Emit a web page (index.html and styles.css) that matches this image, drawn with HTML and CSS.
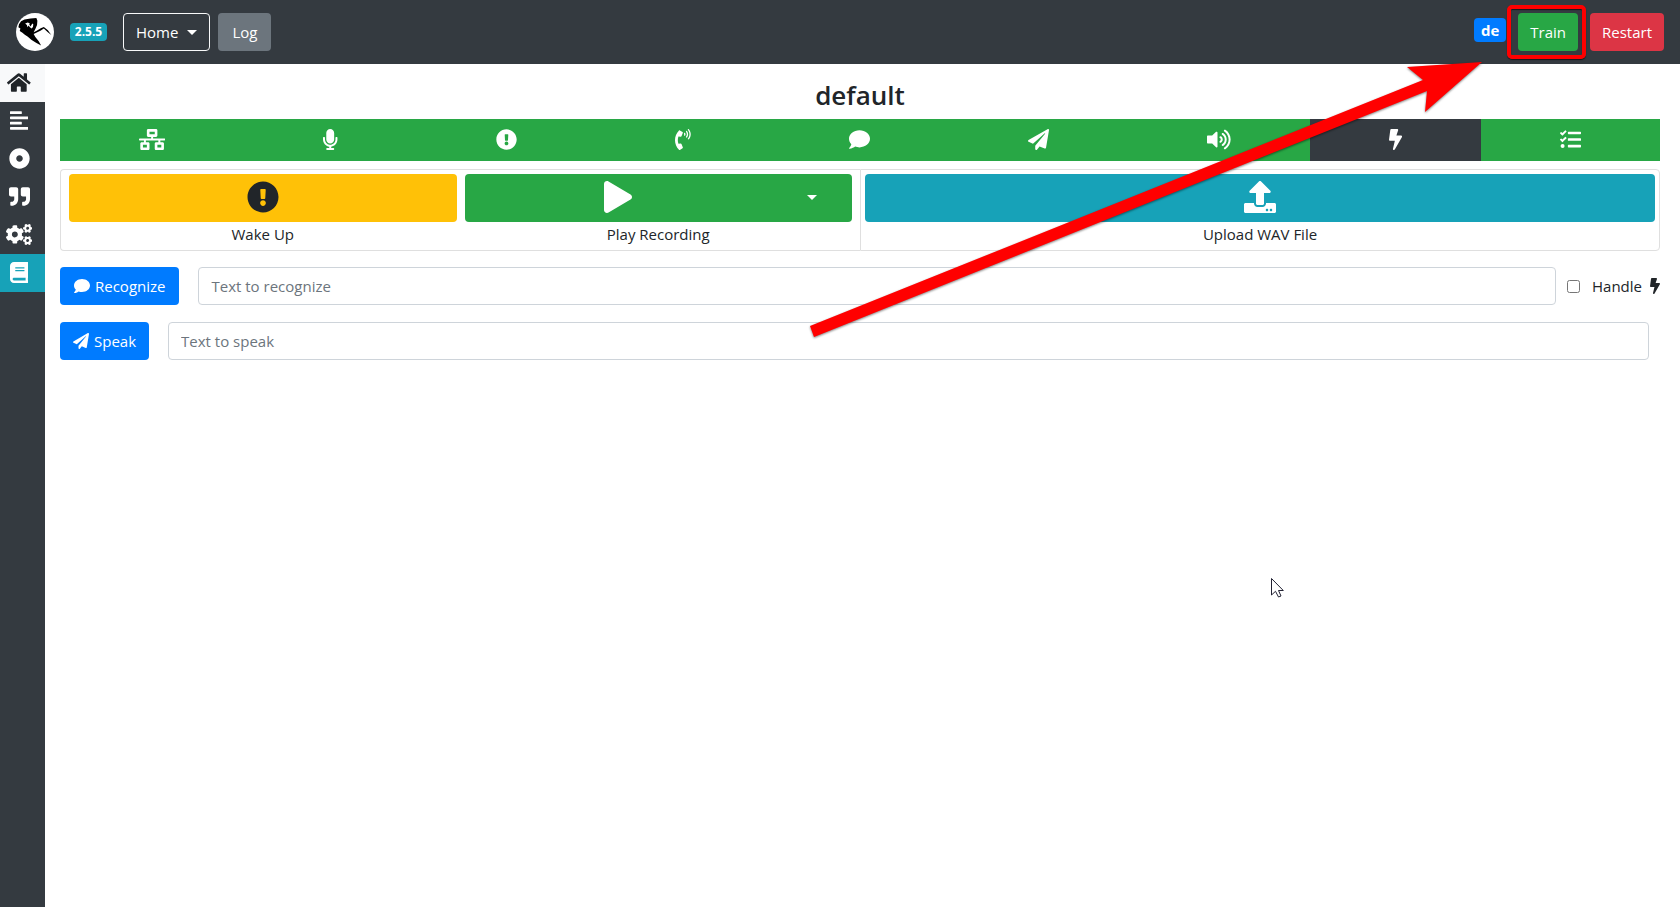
FILE: index.html
```html
<!DOCTYPE html>
<html lang="en">
<head>
<meta charset="utf-8">
<title>Home</title>
<link rel="stylesheet" href="styles.css">
</head>
<body>
<header class="navbar">
  <a class="brand" href="#" aria-label="Home page">
    <svg class="logo" viewBox="49 40 112 112" aria-hidden="true">
      <circle cx="105" cy="96" r="56" fill="#fff"/>
      <path fill="#000" d="M58 73L64 64L74 59L92 56L109 55L112 63L111 75L106 87L101 97L110 92L122 85L131 81L143 91L153 105L142 96L131 86L121 92L101 102L106 111L116 123L123 136L108 128L94 119L84 110L75 104L68 98L60 93L62 86L56 82Z"/>
      <path fill="#fff" d="M76 71L84 68L90 71L88 74L92 80L97 71L100 73L99 81L95 86L90 82L86 77L83 82L81 75Z"/>
    </svg>
  </a>
  <span class="badge badge-info">2.5.5</span>
  <button class="btn btn-outline" type="button">Home <span class="caret"></span></button>
  <button class="btn btn-secondary" type="button">Log</button>
  <div class="nav-right">
    <span class="badge badge-lang">de</span>
    <div class="marked">
      <button class="btn btn-success" type="button">Train</button>
      <span class="frame"></span>
    </div>
    <button class="btn btn-danger" type="button">Restart</button>
  </div>
</header>

<div class="layout">
  <nav class="sidebar" aria-label="Main">
    <a class="side-item side-current" href="#" aria-label="Home"><span class="side-icon"><svg class="icon icon-lg" viewBox="0 0 576 512"><path d="M280.37 148.26L96 300.11V464a16 16 0 0 0 16 16l112.06-.29a16 16 0 0 0 15.92-16V368a16 16 0 0 1 16-16h64a16 16 0 0 1 16 16v95.64a16 16 0 0 0 16 16.05L464 480a16 16 0 0 0 16-16V300L295.67 148.26a12.19 12.19 0 0 0-15.3 0zM571.6 251.47L488 182.56V44.05a12 12 0 0 0-12-12h-56a12 12 0 0 0-12 12v72.61L318.47 43a48 48 0 0 0-61 0L4.34 251.47a12 12 0 0 0-1.6 16.9l25.5 31A12 12 0 0 0 45.15 301l235.22-193.74a12.19 12.19 0 0 1 15.3 0L530.9 301a12 12 0 0 0 16.9-1.6l25.5-31a12 12 0 0 0-1.7-16.93z"/></svg></span></a>
    <a class="side-item" href="#" aria-label="Sentences"><span class="side-icon"><svg class="icon icon-lg" viewBox="0 0 448 512"><path d="M12.83 352h262.34A12.82 12.82 0 0 0 288 339.17v-38.34A12.82 12.82 0 0 0 275.17 288H12.83A12.82 12.82 0 0 0 0 300.83v38.34A12.82 12.82 0 0 0 12.83 352zm0-256h262.34A12.82 12.82 0 0 0 288 83.17V44.83A12.82 12.82 0 0 0 275.17 32H12.83A12.82 12.82 0 0 0 0 44.83v38.34A12.82 12.82 0 0 0 12.83 96zM432 160H16a16 16 0 0 0-16 16v32a16 16 0 0 0 16 16h416a16 16 0 0 0 16-16v-32a16 16 0 0 0-16-16zm0 256H16a16 16 0 0 0-16 16v32a16 16 0 0 0 16 16h416a16 16 0 0 0 16-16v-32a16 16 0 0 0-16-16z"/></svg></span></a>
    <a class="side-item" href="#" aria-label="Slots"><span class="side-icon"><svg class="icon icon-lg" viewBox="0 0 512 512"><path d="M256 8C119.033 8 8 119.033 8 256s111.033 248 248 248 248-111.033 248-248S392.967 8 256 8zm80 248c0 44.112-35.888 80-80 80s-80-35.888-80-80 35.888-80 80-80 80 35.888 80 80z"/></svg></span></a>
    <a class="side-item" href="#" aria-label="Words"><span class="side-icon"><svg class="icon icon-lg" viewBox="0 0 512 512"><path d="M464 32H336c-26.5 0-48 21.5-48 48v128c0 26.5 21.5 48 48 48h80v64c0 35.3-28.7 64-64 64h-8c-13.3 0-24 10.7-24 24v48c0 13.3 10.7 24 24 24h8c88.4 0 160-71.6 160-160V80c0-26.5-21.5-48-48-48zm-288 0H48C21.5 32 0 53.5 0 80v128c0 26.5 21.5 48 48 48h80v64c0 35.3-28.7 64-64 64h-8c-13.3 0-24 10.7-24 24v48c0 13.3 10.7 24 24 24h8c88.4 0 160-71.6 160-160V80c0-26.5-21.5-48-48-48z"/></svg></span></a>
    <a class="side-item" href="#" aria-label="Settings"><span class="side-icon"><svg class="icon icon-lg" viewBox="0 0 640 512"><path id="small-cog" d="M512.1 191l-8.2 14.3c-3 5.3-9.4 7.5-15.1 5.4-11.8-4.4-22.6-10.7-32.1-18.6-4.6-3.8-5.8-10.5-2.8-15.7l8.2-14.3c-6.9-8-12.3-17.3-15.9-27.4h-16.5c-6 0-11.2-4.3-12.2-10.3-2-12-2.1-24.6 0-37.1 1-6 6.2-10.4 12.2-10.4h16.5c3.6-10.1 9-19.4 15.9-27.4l-8.2-14.3c-3-5.2-1.9-11.9 2.8-15.7 9.5-7.9 20.4-14.2 32.1-18.6 5.7-2.1 12.1.1 15.1 5.4l8.2 14.3c10.5-1.9 21.2-1.9 31.7 0L552 6.3c3-5.3 9.4-7.5 15.1-5.4 11.8 4.4 22.6 10.7 32.1 18.6 4.6 3.8 5.8 10.5 2.8 15.7l-8.2 14.3c6.9 8 12.3 17.3 15.9 27.4h16.5c6 0 11.2 4.3 12.2 10.3 2 12 2.1 24.6 0 37.1-1 6-6.2 10.4-12.2 10.4h-16.5c-3.6 10.1-9 19.4-15.9 27.4l8.2 14.3c3 5.2 1.9 11.9-2.8 15.7-9.5 7.9-20.4 14.2-32.1 18.6-5.7 2.1-12.1-.1-15.1-5.4l-8.2-14.3c-10.4 1.9-21.2 1.9-31.7 0zm-10.5-58.8c38.5 29.6 82.4-14.3 52.8-52.8-38.5-29.7-82.4 14.3-52.8 52.8z"/><use href="#small-cog" transform="translate(0 299)"/><path d="M386.3 286.1l33.7 16.8c10.1 5.8 14.5 18.1 10.5 29.1-8.9 24.2-26.4 46.4-42.6 65.8-7.4 8.9-20.2 11.1-30.3 5.3l-29.1-16.8c-16 13.7-34.6 24.6-54.9 31.7v33.6c0 11.6-8.3 21.6-19.7 23.6-24.6 4.2-50.4 4.4-75.9 0-11.5-2-20-11.9-20-23.6V418c-20.3-7.2-38.9-18-54.9-31.7L74 403c-10 5.8-22.9 3.6-30.3-5.3-16.2-19.4-33.3-41.6-42.2-65.7-4-10.9.4-23.2 10.5-29.1l33.3-16.8c-3.9-20.9-3.9-42.4 0-63.4L12 205.8c-10.1-5.8-14.6-18.1-10.5-29 8.9-24.2 26-46.4 42.2-65.8 7.4-8.9 20.2-11.1 30.3-5.3l29.1 16.8c16-13.7 34.6-24.6 54.9-31.7V57.1c0-11.5 8.2-21.5 19.6-23.5 24.6-4.2 50.5-4.4 76-.1 11.5 2 20 11.9 20 23.6v33.6c20.3 7.2 38.9 18 54.9 31.7l29.1-16.8c10-5.8 22.9-3.6 30.3 5.3 16.2 19.4 33.2 41.6 42.1 65.8 4 10.9.1 23.2-10 29.1l-33.7 16.8c3.9 21 3.9 42.5 0 63.5zm-117.6 21.1c59.2-77-28.7-164.9-105.7-105.7-59.2 77 28.7 164.9 105.7 105.7z"/></svg></span></a>
    <a class="side-item side-docs" href="#" aria-label="Documentation"><span class="side-icon"><svg class="icon icon-lg" viewBox="0 0 448 512"><path d="M448 360V24c0-13.3-10.7-24-24-24H96C43 0 0 43 0 96v320c0 53 43 96 96 96h328c13.3 0 24-10.7 24-24v-16c0-7.5-3.5-14.3-8.9-18.7-4.2-15.4-4.2-59.3 0-74.7 5.4-4.3 8.9-11.1 8.9-18.6zM128 134c0-3.3 2.7-6 6-6h212c3.3 0 6 2.7 6 6v20c0 3.3-2.7 6-6 6H134c-3.3 0-6-2.7-6-6v-20zm0 64c0-3.3 2.7-6 6-6h212c3.3 0 6 2.7 6 6v20c0 3.3-2.7 6-6 6H134c-3.3 0-6-2.7-6-6v-20zm253.4 250H96c-17.7 0-32-14.3-32-32 0-17.6 14.4-32 32-32h285.4c-1.9 17.1-1.9 46.9 0 64z"/></svg></span></a>
  </nav>

  <main class="content">
    <h1 class="title">default</h1>

    <div class="services">
      <button class="service" type="button" aria-label="Network"><svg class="icon icon-lg" viewBox="0 0 640 512"><path d="M640 264v-16c0-8.84-7.16-16-16-16H344v-40h72c17.67 0 32-14.33 32-32V32c0-17.67-14.33-32-32-32H224c-17.67 0-32 14.33-32 32v128c0 17.67 14.33 32 32 32h72v40H16c-8.84 0-16 7.16-16 16v16c0 8.84 7.16 16 16 16h104v40H64c-17.67 0-32 14.33-32 32v128c0 17.67 14.33 32 32 32h160c17.67 0 32-14.33 32-32V352c0-17.67-14.33-32-32-32h-56v-40h304v40h-56c-17.67 0-32 14.33-32 32v128c0 17.67 14.33 32 32 32h160c17.67 0 32-14.33 32-32V352c0-17.67-14.33-32-32-32h-56v-40h104c8.84 0 16-7.16 16-16zM256 128V64h128v64H256zm-64 320H96v-64h96v64zm352 0h-96v-64h96v64z"/></svg></button>
      <button class="service" type="button" aria-label="Audio recording"><svg class="icon icon-lg" viewBox="0 0 352 512"><path d="M176 352c53.02 0 96-42.98 96-96V96c0-53.02-42.98-96-96-96S80 42.98 80 96v160c0 53.02 42.98 96 96 96zm160-160h-16c-8.84 0-16 7.16-16 16v48c0 74.8-64.49 134.82-140.79 127.38C96.71 376.89 48 317.11 48 250.3V208c0-8.84-7.16-16-16-16H16c-8.84 0-16 7.16-16 16v40.16c0 89.64 63.97 169.55 152 181.69V464H96c-8.84 0-16 7.16-16 16v16c0 8.84 7.16 16 16 16h160c8.84 0 16-7.16 16-16v-16c0-8.84-7.16-16-16-16h-56v-33.77C285.71 418.47 352 344.9 352 256v-48c0-8.84-7.16-16-16-16z"/></svg></button>
      <button class="service" type="button" aria-label="Wake word"><svg class="icon icon-lg" viewBox="0 0 512 512"><path d="M504 256c0 136.997-111.043 248-248 248S8 392.997 8 256C8 119.083 119.043 8 256 8s248 111.083 248 248zm-248 50c-25.405 0-46 20.595-46 46s20.595 46 46 46 46-20.595 46-46-20.595-46-46-46zm-43.673-165.346l7.418 136c.347 6.364 5.609 11.346 11.982 11.346h48.546c6.373 0 11.635-4.982 11.982-11.346l7.418-136c.375-6.874-5.098-12.654-11.982-12.654h-63.383c-6.884 0-12.356 5.78-11.981 12.654z"/></svg></button>
      <button class="service" type="button" aria-label="Speech to text"><svg class="icon icon-lg" viewBox="0 0 384 512"><path d="M97.333 506.966c-129.874-129.874-129.681-340.252 0-469.933 5.698-5.698 14.527-6.632 21.263-2.422l64.817 40.513a17.187 17.187 0 0 1 6.849 20.958l-32.408 81.021a17.188 17.188 0 0 1-17.669 10.719l-55.81-5.58c-21.051 58.261-20.612 122.471 0 179.515l55.811-5.581a17.188 17.188 0 0 1 17.669 10.719l32.408 81.022a17.188 17.188 0 0 1-6.849 20.958l-64.817 40.513a17.19 17.19 0 0 1-21.264-2.422zM247.126 95.473c11.832 20.047 11.832 45.008 0 65.055-3.95 6.693-13.108 7.959-18.718 2.581l-5.975-5.726c-3.911-3.748-4.793-9.622-2.261-14.41a32.063 32.063 0 0 0 0-29.945c-2.533-4.788-1.65-10.662 2.261-14.41l5.975-5.726c5.61-5.378 14.768-4.112 18.718 2.581zm91.787-91.187c60.14 71.604 60.092 175.882 0 247.428-4.474 5.327-12.53 5.746-17.552.933l-5.798-5.557c-4.56-4.371-4.977-11.529-.93-16.379 49.687-59.538 49.646-145.933 0-205.422-4.047-4.85-3.631-12.008.93-16.379l5.798-5.557c5.022-4.813 13.078-4.394 17.552.933zm-45.972 44.941c36.05 46.322 36.108 111.149 0 157.546-4.39 5.641-12.697 6.251-17.856 1.304l-5.818-5.579c-4.4-4.219-4.998-11.095-1.285-15.931 26.536-34.564 26.534-82.572 0-117.134-3.713-4.836-3.115-11.711 1.285-15.931l5.818-5.579c5.159-4.947 13.466-4.337 17.856 1.304z"/></svg></button>
      <button class="service" type="button" aria-label="Intent recognition"><svg class="icon icon-lg" viewBox="0 0 512 512"><path d="M256 32C114.6 32 0 125.1 0 240c0 49.6 21.4 95 57 130.7C44.5 421.1 2.7 466 2.2 466.5c-2.2 2.3-2.8 5.7-1.5 8.7S4.8 480 8 480c66.3 0 116-31.8 140.6-51.4 32.7 12.3 69 19.4 107.4 19.4 141.4 0 256-93.1 256-208S397.4 32 256 32z"/></svg></button>
      <button class="service" type="button" aria-label="Text to speech"><svg class="icon icon-lg" viewBox="0 0 512 512"><path d="M476 3.2L12.5 270.6c-18.1 10.4-15.8 35.6 2.2 43.2L121 358.4l287.3-253.2c5.5-4.9 13.3 2.6 8.6 8.3L176 407v80.5c0 23.6 28.5 32.9 42.5 15.8L282 426l124.6 52.2c14.2 6 30.4-2.9 33-18.2l72-432C515 7.8 493.3-6.8 476 3.2z"/></svg></button>
      <button class="service" type="button" aria-label="Audio playing"><svg class="icon icon-lg" viewBox="0 0 576 512"><path d="M215.03 71.05L126.06 160H24c-13.26 0-24 10.74-24 24v144c0 13.25 10.74 24 24 24h102.06l88.97 88.95c15.03 15.03 40.97 4.47 40.97-16.97V88.02c0-21.46-25.96-31.98-40.97-16.97zm233.32-51.08c-11.17-7.33-26.18-4.24-33.51 6.95-7.34 11.17-4.22 26.18 6.95 33.51 66.27 43.49 105.82 116.6 105.82 195.58 0 78.98-39.55 152.09-105.82 195.58-11.17 7.32-14.29 22.34-6.95 33.5 7.04 10.71 21.93 14.56 33.51 6.95C528.27 439.58 576 351.33 576 256S528.27 72.43 448.35 19.97zM480 256c0-63.53-32.06-121.94-85.77-156.24-11.19-7.14-26.03-3.82-33.12 7.46s-3.78 26.21 7.41 33.36C408.27 165.97 432 209.11 432 256s-23.73 90.02-63.48 115.42c-11.19 7.14-14.5 22.07-7.41 33.36 6.51 10.36 21.12 15.14 33.12 7.46C447.94 377.94 480 319.54 480 256zm-141.77-76.87c-11.58-6.33-26.19-2.16-32.61 9.45-6.39 11.61-2.16 26.2 9.45 32.61C327.98 228.28 336 241.63 336 256c0 14.38-8.02 27.72-20.92 34.81-11.61 6.41-15.84 21-9.45 32.61 6.43 11.66 21.05 15.8 32.61 9.45 28.23-15.55 45.77-45 45.77-76.88s-17.54-61.32-45.78-76.86z"/></svg></button>
      <button class="service service-off" type="button" aria-label="Intent handling"><svg class="icon icon-lg" viewBox="0 0 320 512"><path d="M296 160H180.6l42.6-129.8C227.2 15 215.7 0 200 0H56C44 0 33.8 8.9 32.2 20.8l-32 240C-1.7 275.2 9.5 288 24 288h118.7L96.6 482.5c-3.6 15.2 8 29.5 23.3 29.5 8.4 0 16.4-4.4 20.8-12l176-304c9.3-15.9-2.2-36-20.7-36z"/></svg></button>
      <button class="service" type="button" aria-label="Dialogue management"><svg class="icon icon-lg" viewBox="0 0 512 512"><path d="M139.61 35.5a12 12 0 0 0-17 0L58.93 98.81l-22.7-22.12a12 12 0 0 0-17 0L3.53 92.41a12 12 0 0 0 0 17l47.59 47.4a12.78 12.78 0 0 0 17.61 0l15.59-15.62L156.52 69a12.09 12.09 0 0 0 .09-17zm0 159.19a12 12 0 0 0-17 0l-63.68 63.72-22.7-22.1a12 12 0 0 0-17 0L3.53 252a12 12 0 0 0 0 17L51 316.5a12.77 12.77 0 0 0 17.6 0l15.7-15.69 72.2-72.22a12 12 0 0 0 .09-16.9zM64 368c-26.49 0-48.59 21.5-48.59 48S37.53 464 64 464a48 48 0 0 0 0-96zm432 16H208a16 16 0 0 0-16 16v32a16 16 0 0 0 16 16h288a16 16 0 0 0 16-16v-32a16 16 0 0 0-16-16zm0-320H208a16 16 0 0 0-16 16v32a16 16 0 0 0 16 16h288a16 16 0 0 0 16-16V80a16 16 0 0 0-16-16zm0 160H208a16 16 0 0 0-16 16v32a16 16 0 0 0 16 16h288a16 16 0 0 0 16-16v-32a16 16 0 0 0-16-16z"/></svg></button>
    </div>

    <div class="cards">
      <section class="card card-voice">
        <div class="action">
          <button class="big big-warning" id="wake" type="button" aria-labelledby="wake-label"><svg class="icon icon-2x" viewBox="0 0 512 512"><path d="M504 256c0 136.997-111.043 248-248 248S8 392.997 8 256C8 119.083 119.043 8 256 8s248 111.083 248 248zm-248 50c-25.405 0-46 20.595-46 46s20.595 46 46 46 46-20.595 46-46-20.595-46-46-46zm-43.673-165.346l7.418 136c.347 6.364 5.609 11.346 11.982 11.346h48.546c6.373 0 11.635-4.982 11.982-11.346l7.418-136c.375-6.874-5.098-12.654-11.982-12.654h-63.383c-6.884 0-12.356 5.78-11.981 12.654z"/></svg></button>
          <label id="wake-label" for="wake">Wake Up</label>
        </div>
        <div class="action">
          <div class="split">
            <button class="big big-success split-main" id="play" type="button" aria-labelledby="play-label"><svg class="icon icon-2x" viewBox="0 0 448 512"><path d="M424.4 214.7L72.4 6.6C43.8-10.3 0 6.1 0 47.9V464c0 37.5 40.7 60.1 72.4 41.3l352-208c31.4-18.5 31.5-64.1 0-82.6z"/></svg></button>
            <button class="big big-success split-toggle" type="button" aria-label="More playback options"><span class="caret"></span></button>
          </div>
          <label id="play-label" for="play">Play Recording</label>
        </div>
      </section>
      <section class="card card-upload">
        <div class="action">
          <button class="big big-info" id="upload" type="button" aria-labelledby="upload-label"><svg class="icon icon-2x" viewBox="0 0 512 512"><path d="M296 384h-80c-13.3 0-24-10.7-24-24V192h-87.7c-17.8 0-26.7-21.5-14.1-34.1L242.3 5.7c7.5-7.5 19.8-7.5 27.3 0l152.2 152.2c12.6 12.6 3.7 34.1-14.1 34.1H320v168c0 13.3-10.7 24-24 24zm216-8v112c0 13.3-10.7 24-24 24H24c-13.3 0-24-10.7-24-24V376c0-13.3 10.7-24 24-24h136v8c0 30.9 25.1 56 56 56h80c30.9 0 56-25.1 56-56v-8h136c13.3 0 24 10.7 24 24zm-124 88c0-11-9-20-20-20s-20 9-20 20 9 20 20 20 20-9 20-20zm64 0c0-11-9-20-20-20s-20 9-20 20 9 20 20 20 20-9 20-20z"/></svg></button>
          <label id="upload-label" for="upload">Upload WAV File</label>
        </div>
      </section>
    </div>

    <form class="row row-recognize">
      <button class="btn btn-primary" type="button"><svg class="icon" viewBox="0 0 512 512"><path d="M256 32C114.6 32 0 125.1 0 240c0 49.6 21.4 95 57 130.7C44.5 421.1 2.7 466 2.2 466.5c-2.2 2.3-2.8 5.7-1.5 8.7S4.8 480 8 480c66.3 0 116-31.8 140.6-51.4 32.7 12.3 69 19.4 107.4 19.4 141.4 0 256-93.1 256-208S397.4 32 256 32z"/></svg>Recognize</button>
      <input class="field" type="text" placeholder="Text to recognize" aria-label="Text to recognize">
      <div class="check">
        <input class="tick" type="checkbox" id="handle">
        <label class="check-label" for="handle">Handle <svg class="icon" viewBox="0 0 320 512"><path d="M296 160H180.6l42.6-129.8C227.2 15 215.7 0 200 0H56C44 0 33.8 8.9 32.2 20.8l-32 240C-1.7 275.2 9.5 288 24 288h118.7L96.6 482.5c-3.6 15.2 8 29.5 23.3 29.5 8.4 0 16.4-4.4 20.8-12l176-304c9.3-15.9-2.2-36-20.7-36z"/></svg></label>
      </div>
    </form>
    <form class="row row-speak">
      <button class="btn btn-primary" type="button"><svg class="icon" viewBox="0 0 512 512"><path d="M476 3.2L12.5 270.6c-18.1 10.4-15.8 35.6 2.2 43.2L121 358.4l287.3-253.2c5.5-4.9 13.3 2.6 8.6 8.3L176 407v80.5c0 23.6 28.5 32.9 42.5 15.8L282 426l124.6 52.2c14.2 6 30.4-2.9 33-18.2l72-432C515 7.8 493.3-6.8 476 3.2z"/></svg>Speak</button>
      <input class="field" type="text" placeholder="Text to speak" aria-label="Text to speak">
    </form>
  </main>
</div>

<svg class="arrow" viewBox="0 0 680 284" aria-hidden="true"><path d="M0 264L613 18L597 5L672 0L615 50L617 29L4 275Z"/></svg>
<svg class="pointer" viewBox="0 0 13 20" aria-hidden="true"><path d="M.5.5V17L4.500 13.300L7.500 19L10 18L7.500 12.500H12.300Z"/></svg>
</body>
</html>
```
FILE: styles.css
```css
*, *::before, *::after { box-sizing: border-box; }

body {
  margin: 0;
  min-height: 100vh;
  display: flex;
  flex-direction: column;
  position: relative;
  background: #fff;
  color: #212529;
  font: 15px/24px "Open Sans", "Noto Sans", sans-serif;
}

button, input { font: inherit; }
button { cursor: pointer; }

.icon { height: 16px; width: auto; fill: currentColor; flex: none; }
.icon-lg { height: 21px; }
.icon-2x { height: 32px; }

.caret {
  border-top: 5px solid currentColor;
  border-left: 5px solid transparent;
  border-right: 5px solid transparent;
}

/* Top bar */
.navbar {
  display: flex;
  align-items: center;
  height: 64px;
  padding: 0 16px;
  background: #343a40;
}
.brand { display: flex; margin-right: 16px; }
.logo { width: 38px; height: 38px; }

.badge {
  border-radius: 4px;
  color: #fff;
  font-weight: 700;
  text-align: center;
}
.badge-info {
  width: 37px;
  margin-right: 16px;
  background: #17a2b8;
  font-size: 12px;
  line-height: 18px;
}
.badge-lang {
  width: 32px;
  margin: 0 12px 4px 0;
  background: #007bff;
  font-size: 15px;
  line-height: 24px;
}

.btn {
  display: inline-flex;
  align-items: center;
  justify-content: center;
  height: 38px;
  padding: 0 12px;
  border: 1px solid transparent;
  border-radius: 4px;
  color: #fff;
  white-space: nowrap;
}
.btn-outline { gap: 9px; margin-right: 8px; border-color: #f8f9fa; background: transparent; }
.btn-secondary { padding: 0 13px; background: #6c757d; }
.btn-success { padding: 0 11px; background: #28a745; }
.btn-danger { padding: 0 11px; background: #dc3545; }
.btn-primary { gap: 5px; background: #007bff; }

.nav-right { display: flex; align-items: center; margin-left: auto; }
.marked { position: relative; display: flex; margin-right: 12px; }
.frame {
  position: absolute;
  inset: -8px -8px -8px -11px;
  border: 4px solid #f00;
  border-radius: 5px;
  box-shadow: 0 1px 1px rgba(0, 0, 0, .6), inset 0 1px 1px rgba(0, 0, 0, .6);
  pointer-events: none;
}

/* Page body */
.layout { display: flex; flex: 1; }
.sidebar { flex: 0 0 45px; background: #343a40; }
.side-item { display: flex; align-items: center; height: 38px; padding: 0 0 2px 6px; color: #fff; }
.side-icon { display: flex; justify-content: center; width: 26px; }
.side-current { background: #f8f9fa; color: #212529; }
.side-docs { background: #17a2b8; }

.content { flex: 1; min-width: 0; padding: 14px 20px 0 15px; }
.title { margin: 0 0 7px; font-size: 26px; line-height: 34px; font-weight: 600; text-align: center; }

.services { display: flex; }
.service {
  flex: 1 1 auto;
  display: flex;
  align-items: center;
  justify-content: center;
  height: 42px;
  padding: 0 12px 2px;
  border: 0;
  background: #28a745;
  color: #fff;
}
.service-off { background: #343a40; }

.cards { display: grid; grid-template-columns: 1fr 1fr; margin-top: 8px; }
.card { display: flex; border: 1px solid #dfdfdf; padding: 4px; }
.card-voice { gap: 8px; padding: 4px 8px; border-right: 0; border-radius: 4px 0 0 4px; }
.card-upload { border-radius: 0 4px 4px 0; }
.action { flex: 1 1 0; display: flex; flex-direction: column; text-align: center; }
.big {
  display: flex;
  align-items: center;
  justify-content: center;
  width: 100%;
  height: 48px;
  padding: 0 12px 2px;
  border: 0;
  border-radius: 4px;
  color: #fff;
}
.big-warning { background: #ffc107; color: #212529; }
.big-success { background: #28a745; }
.big-info { background: #17a2b8; }
.split { display: flex; }
.split-main { flex: 1; border-radius: 4px 0 0 4px; }
.split-toggle { flex: 0 0 80px; border-radius: 0 4px 4px 0; }

.row { display: flex; align-items: center; margin-top: 16px; }
.row-speak { margin-top: 17px; padding-right: 11px; }
.row-recognize .btn { padding: 0 13px; }
.field {
  flex: 1;
  min-width: 0;
  height: 38px;
  margin-left: 19px;
  padding: 0 12px;
  border: 1px solid #ced4da;
  border-radius: 4px;
  color: #495057;
}
.field::placeholder { color: #6c757d; opacity: 1; }
.check { display: flex; align-items: center; gap: 12px; margin-left: 11px; }
.tick { width: 13px; height: 13px; margin: 0; }
.check-label { display: flex; align-items: center; gap: 8px; }

/* Overlays */
.arrow {
  position: absolute;
  top: 62px;
  right: 190px;
  width: 680px;
  height: 284px;
  fill: #f00;
  filter: drop-shadow(0 1px 1px rgba(0, 0, 0, .5));
  pointer-events: none;
}
.pointer {
  position: absolute;
  top: 578px;
  left: 1271px;
  width: 13px;
  height: 20px;
  fill: #fff;
  stroke: #223;
  pointer-events: none;
}
```
